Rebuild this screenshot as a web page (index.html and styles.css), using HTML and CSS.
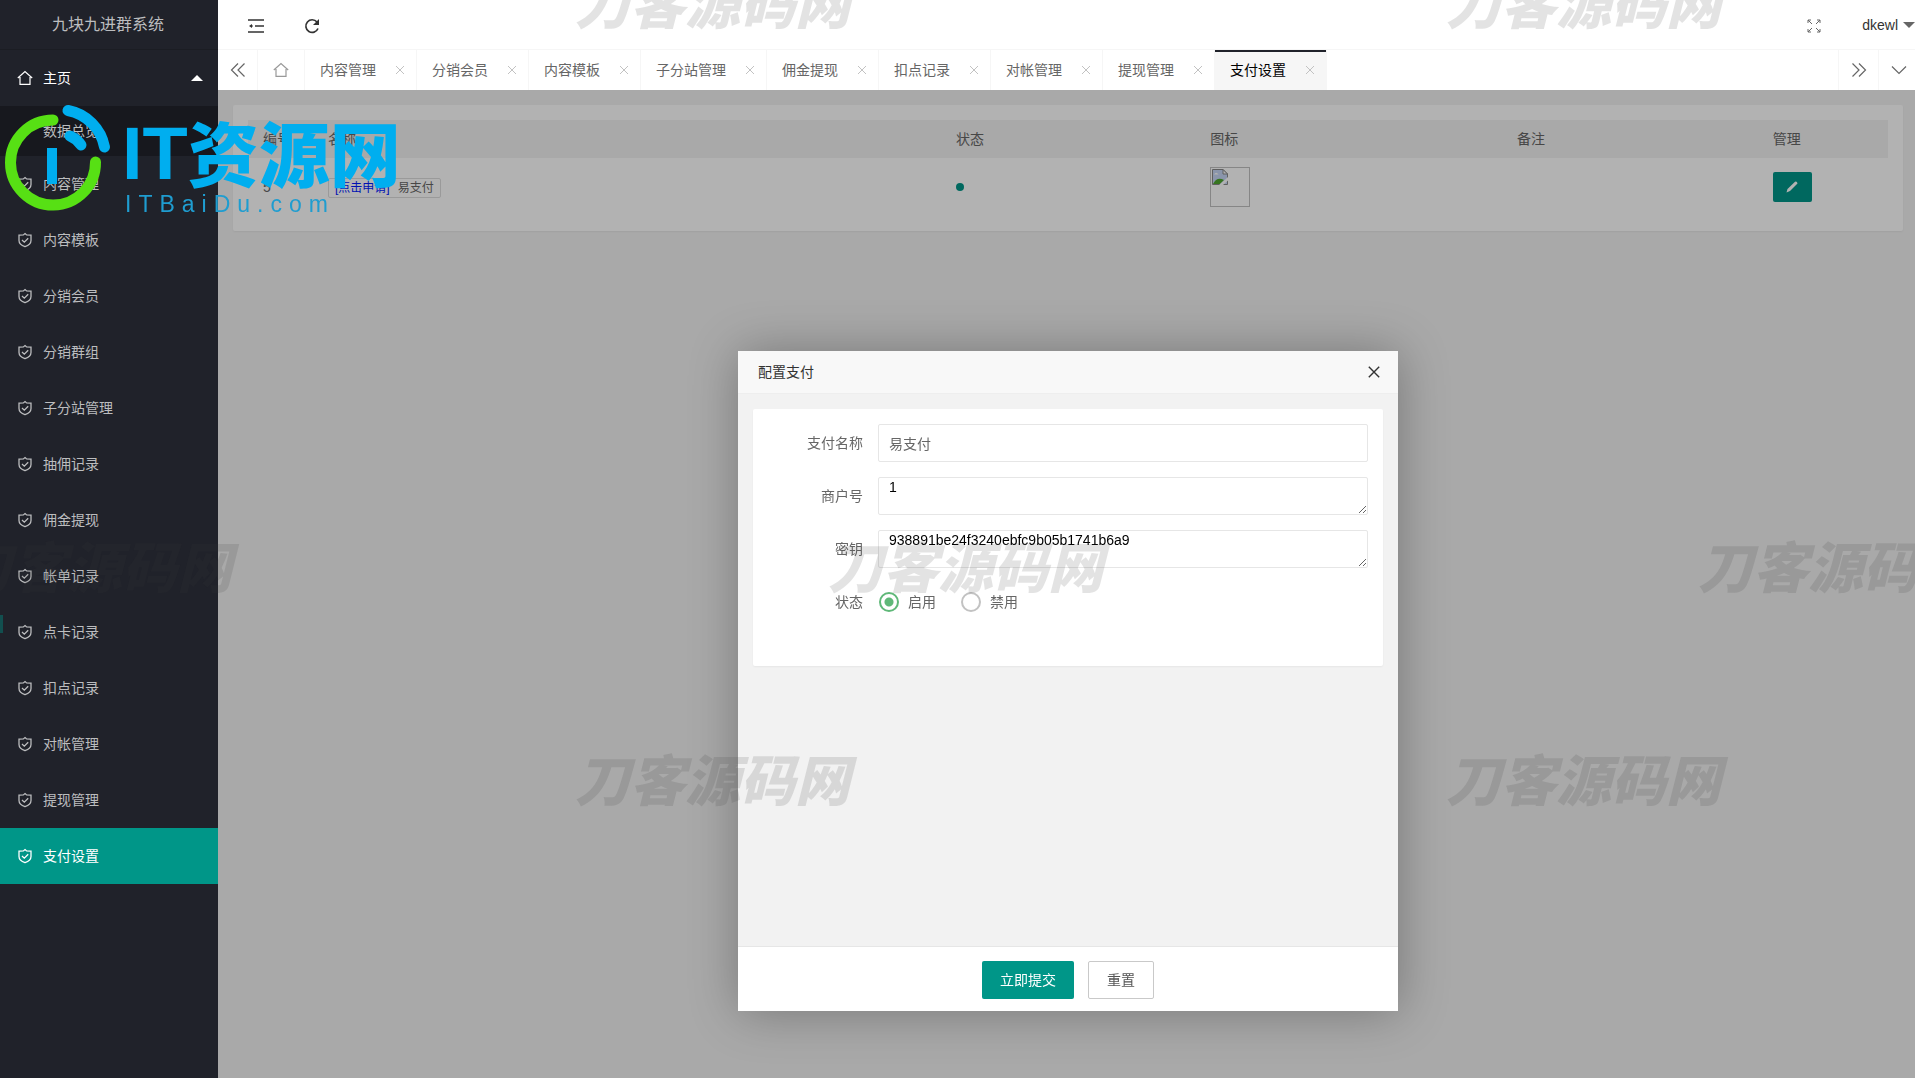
FILE: index.html
```html
<!DOCTYPE html>
<html lang="zh-CN">
<head>
<meta charset="utf-8">
<meta name="viewport" content="width=device-width, initial-scale=1">
<title>九块九进群系统</title>
<link rel="stylesheet" href="styles.css">
</head>
<body>
<svg class="sprite" aria-hidden="true">
  <symbol id="i-shield" viewBox="0 0 16 16"><path d="M8 1.6 9.6 2.9 14 3.2V8.600C14 11.500 11.400 13.600 8 14.700 4.600 13.600 2 11.500 2 8.600V3.200L6.400 2.900Z M5 8 7.300 10.200 11.200 6.200" fill="none" stroke="currentColor" stroke-width="1.300"/></symbol>
  <symbol id="i-home" viewBox="0 0 16 16"><path d="M.8 8 8 1.500 15.200 8M3 7V14.300H13V7" fill="none" stroke="currentColor" stroke-width="1.200"/></symbol>
  <symbol id="i-x" viewBox="0 0 10 10"><path d="M1 1 9 9M9 1 1 9" fill="none" stroke="currentColor"/></symbol>
</svg>
<div class="app">
  <aside class="side">
    <h1 class="brand">九块九进群系统</h1>
    <nav class="menu">
      <a class="item home" href="#"><svg class="ico"><use href="#i-home"/></svg>主页<span class="caret up"></span></a>
      <a class="item child" href="#">数据总览</a>
      <a class="item" href="#"><svg class="ico"><use href="#i-shield"/></svg>内容管理</a>
      <a class="item" href="#"><svg class="ico"><use href="#i-shield"/></svg>内容模板</a>
      <a class="item" href="#"><svg class="ico"><use href="#i-shield"/></svg>分销会员</a>
      <a class="item" href="#"><svg class="ico"><use href="#i-shield"/></svg>分销群组</a>
      <a class="item" href="#"><svg class="ico"><use href="#i-shield"/></svg>子分站管理</a>
      <a class="item" href="#"><svg class="ico"><use href="#i-shield"/></svg>抽佣记录</a>
      <a class="item" href="#"><svg class="ico"><use href="#i-shield"/></svg>佣金提现</a>
      <a class="item" href="#"><svg class="ico"><use href="#i-shield"/></svg>帐单记录</a>
      <a class="item trail" href="#"><svg class="ico"><use href="#i-shield"/></svg>点卡记录</a>
      <a class="item" href="#"><svg class="ico"><use href="#i-shield"/></svg>扣点记录</a>
      <a class="item" href="#"><svg class="ico"><use href="#i-shield"/></svg>对帐管理</a>
      <a class="item" href="#"><svg class="ico"><use href="#i-shield"/></svg>提现管理</a>
      <a class="item active" href="#" aria-current="page"><svg class="ico"><use href="#i-shield"/></svg>支付设置</a>
    </nav>
  </aside>
  <div class="main">
    <header class="top">
      <button class="tool" type="button" aria-label="收起菜单"><svg width="16" height="16" viewBox="0 0 16 16"><path d="M0 2H16M7 8H16M0 14H16" stroke="currentColor" stroke-width="1.500"/><path d="M1 8 4 6V10Z" fill="currentColor"/><path d="M3 8H5" stroke="currentColor"/></svg></button>
      <button class="tool" type="button" aria-label="刷新"><svg width="16" height="16" viewBox="0 0 16 16"><path d="M14 10.500A6.300 6.300 0 1 1 13 4" fill="none" stroke="currentColor" stroke-width="1.700"/><path d="M15 1V7H9Z" fill="currentColor"/></svg></button>
      <button class="tool full" type="button" aria-label="全屏"><svg width="14" height="14" viewBox="0 0 14 14"><path d="M1 4V1H4M1 1 5 5M10 1H13V4M13 1 9 5M1 10V13H4M1 13 5 9M13 10V13H10M13 13 9 9" fill="none" stroke="currentColor"/></svg></button>
      <button class="user" type="button">dkewl<span class="caret down"></span></button>
    </header>
    <nav class="tabs">
      <button class="nav-btn first" type="button" aria-label="向左"><svg width="16" height="16" viewBox="0 0 16 16"><path d="M8 1.500 1.500 8 8 14.500M14.500 1.500 8 8 14.500 14.500" fill="none" stroke="currentColor" stroke-width="1.200"/></svg></button>
      <a class="tab-home" href="#" aria-label="主页"><svg class="ico"><use href="#i-home"/></svg></a>
      <div class="tab"><a href="#">内容管理</a><button type="button" aria-label="关闭"><svg><use href="#i-x"/></svg></button></div>
      <div class="tab"><a href="#">分销会员</a><button type="button" aria-label="关闭"><svg><use href="#i-x"/></svg></button></div>
      <div class="tab"><a href="#">内容模板</a><button type="button" aria-label="关闭"><svg><use href="#i-x"/></svg></button></div>
      <div class="tab"><a href="#">子分站管理</a><button type="button" aria-label="关闭"><svg><use href="#i-x"/></svg></button></div>
      <div class="tab"><a href="#">佣金提现</a><button type="button" aria-label="关闭"><svg><use href="#i-x"/></svg></button></div>
      <div class="tab"><a href="#">扣点记录</a><button type="button" aria-label="关闭"><svg><use href="#i-x"/></svg></button></div>
      <div class="tab"><a href="#">对帐管理</a><button type="button" aria-label="关闭"><svg><use href="#i-x"/></svg></button></div>
      <div class="tab"><a href="#">提现管理</a><button type="button" aria-label="关闭"><svg><use href="#i-x"/></svg></button></div>
      <div class="tab on"><a href="#">支付设置</a><button type="button" aria-label="关闭"><svg><use href="#i-x"/></svg></button></div>
      <button class="nav-btn next" type="button" aria-label="向右"><svg width="16" height="16" viewBox="0 0 16 16"><path d="M1.500 1.500 8 8 1.500 14.500M8 1.500 14.500 8 8 14.500" fill="none" stroke="currentColor" stroke-width="1.200"/></svg></button>
      <button class="nav-btn more" type="button" aria-label="更多"><svg width="16" height="16" viewBox="0 0 16 16"><path d="M1 4.500 8 11.500 15 4.500" fill="none" stroke="currentColor" stroke-width="1.200"/></svg></button>
    </nav>
    <main class="page">
      <section class="card">
        <table class="list">
          <colgroup><col class="c-id"><col class="c-name"><col class="c-state"><col class="c-icon"><col class="c-note"><col class="c-act"></colgroup>
          <thead><tr><th>编号</th><th>名称</th><th>状态</th><th>图标</th><th>备注</th><th>管理</th></tr></thead>
          <tbody><tr>
            <td>5</td>
            <td><span class="badge"><a href="#">[点击申请]</a>易支付</span></td>
            <td><span class="dot"></span></td>
            <td><span class="thumb"><svg width="16" height="16" viewBox="0 0 16 16"><path d="M.5.500H11L15.500 5V15.500H.5Z" fill="#c6d6f5" stroke="#888"/><path d="M2 5.500Q4 2 6.500 5.500Z" fill="#fff"/><path d="M1 15Q5 7 12 11L8 15Z" fill="#4fa82e"/><path d="M16 8 7 16H11L16 11.500Z" fill="#fff"/><path d="M11 .5V5H15.500Z" fill="#fff" stroke="#888"/></svg></span></td>
            <td></td>
            <td><button class="edit" type="button" aria-label="编辑"><svg width="14" height="14" viewBox="0 0 14 14"><path d="M1.500 12.500 2.500 9 10 1.800Q12 1 12.500 3.500L5 11Z" fill="currentColor"/></svg></button></td>
          </tr></tbody>
        </table>
      </section>
      <div class="shade"></div>
    </main>
  </div>
</div>

<div class="layer">
  <form class="dialog" role="dialog" aria-labelledby="dlg-title">
    <header class="dlg-head"><h2 id="dlg-title">配置支付</h2><button type="button" aria-label="关闭"><svg width="12" height="12" viewBox="0 0 12 12"><path d="M.8.800 11.200 11.200M11.200.800.8 11.200" stroke="currentColor" stroke-width="1.400"/></svg></button></header>
    <div class="dlg-body">
      <div class="fields">
        <div class="field"><label for="f-name">支付名称</label><input id="f-name" type="text" value="易支付"></div>
        <div class="field"><label for="f-mch">商户号</label><textarea id="f-mch">1</textarea></div>
        <div class="field"><label for="f-key">密钥</label><textarea id="f-key">938891be24f3240ebfc9b05b1741b6a9</textarea></div>
        <div class="field" role="radiogroup" aria-labelledby="l-state"><span class="label" id="l-state">状态</span>
          <div class="radios"><label><input type="radio" name="state" checked>启用</label><label><input type="radio" name="state">禁用</label></div>
        </div>
      </div>
    </div>
    <footer class="dlg-foot"><button class="btn primary" type="submit">立即提交</button><button class="btn" type="reset">重置</button></footer>
  </form>
</div>

<div class="marks" aria-hidden="true">
  <span class="mark m1">刀客源码网</span>
  <span class="mark m2">刀客源码网</span>
  <span class="mark m3">刀客源码网</span>
  <span class="mark m4">刀客源码网</span>
  <span class="mark m5">刀客源码网</span>
  <span class="mark m6">刀客源码网</span>
  <span class="mark m7">刀客源码网</span>
  <div class="logo">
    <svg width="112" height="112" viewBox="0 0 112 112"><g fill="none" stroke-linecap="round"><path d="M53 16A42.500 42.500 0 1 0 95.500 58" stroke="#57e014" stroke-width="11"/><path d="M68 6.500A46 46 0 0 1 104.500 43" stroke="#00aeef" stroke-width="11"/><path d="M70 32Q77 35 81 41" stroke="#00aeef" stroke-width="11"/></g><path d="M47 44H57V80H47Z" fill="#00aeef"/></svg>
    <div class="words"><div class="big"><b>IT</b><span>资源网</span></div><div class="small">ITBaiDu.com</div></div>
  </div>
</div>
</body>
</html>
```
FILE: styles.css
```css
* { box-sizing: border-box; }
body { margin: 0; overflow: hidden; font: 14px/24px "Liberation Sans", "Noto Sans CJK SC", sans-serif; color: #666; background: #f2f2f2; }
a { color: inherit; text-decoration: none; }
button { font: inherit; color: inherit; border: 0; padding: 0; background: none; display: inline-flex; align-items: center; justify-content: center; }
.sprite { position: absolute; width: 0; height: 0; }
.ico { width: 16px; height: 16px; flex: none; }

.app { display: flex; min-height: 100vh; }
.side { flex: 0 0 218px; background: #20222a; color: #bcbdbf; }
.brand { margin: 0; height: 50px; font-size: 16px; font-weight: 400; line-height: 50px; text-align: center; border-bottom: 1px solid #1b1d23; padding-right: 2px; }
.item { display: flex; align-items: center; gap: 10px; height: 56px; padding: 0 15px 0 17px; }
.home { color: #fff; }
.child { height: 50px; padding-left: 43px; background: #17181e; }
.active { background: #009688; color: #fff; }
.trail { background: linear-gradient(#124f4f, #124f4f) no-repeat 0 11px / 3px 18px; }
.caret { border: 6px solid transparent; }
.up { margin-left: auto; border-top: 0; border-bottom-color: #fff; }
.down { border-bottom: 0; border-top-color: #666; }

.main { flex: 1; min-width: 0; display: flex; flex-direction: column; }
.top { display: flex; align-items: center; height: 50px; background: #fff; border-bottom: 1px solid #f6f6f6; color: #333; padding-left: 10px; }
.tool { width: 56px; height: 49px; padding-top: 2px; }
.full { margin-left: auto; color: #666; }
.user { gap: 5px; padding-left: 20px; }
.tabs { display: flex; height: 40px; background: #fff; }
.nav-btn { width: 40px; border-left: 1px solid #f6f6f6; }
.first { border-left: 0; border-right: 1px solid #f6f6f6; }
.next { margin-left: auto; }
.more { width: 37px; padding-left: 3px; }
.tab-home { display: flex; align-items: center; width: 47px; padding-left: 15px; color: #999; border-right: 1px solid #f6f6f6; }
.tab { display: flex; align-items: center; gap: 18px; padding: 0 10px 0 15px; border-right: 1px solid #f6f6f6; }
.tab button { color: #c2c2c2; width: 12px; height: 12px; }
.tab svg { width: 10px; height: 10px; }
.on { background: #f6f6f6; color: #000; box-shadow: inset 0 2px #20222a; }

.page { position: relative; flex: 1; padding: 15px 12px 15px 15px; }
.shade { position: absolute; inset: 0; background: rgba(0, 0, 0, .3); }
.card { background: #fff; border-radius: 2px; padding: 15px; box-shadow: 0 1px 2px rgba(0, 0, 0, .05); }
.list { width: 100%; border-collapse: collapse; table-layout: fixed; }
.list th { height: 38px; padding: 0 15px; background: #f2f2f2; font-weight: 400; text-align: left; }
.list td { height: 58px; padding: 0 15px; }
.c-id { width: 65px; } .c-name { width: 38.3%; } .c-state { width: 15.5%; } .c-icon { width: 18.7%; } .c-note { width: 15.6%; }
.badge { display: inline-flex; gap: 8px; padding: 0 6px; font-size: 12px; line-height: 18px; border: 1px solid #ddd; border-radius: 2px; }
.badge a { color: #0019ff; }
.dot { display: block; width: 8px; height: 8px; border-radius: 50%; background: #009688; }
.thumb { display: flex; width: 40px; height: 40px; padding: 1px; border: 1px solid #c0c0c0; }
.edit { width: 39px; height: 30px; background: #009688; color: #fff; border-radius: 2px; vertical-align: middle; }

.layer { position: fixed; inset: 0; display: flex; align-items: flex-start; justify-content: center; padding: 351px 0 0 221px; }
.dialog { display: flex; flex-direction: column; width: 660px; height: 660px; background: #f2f2f2; border-radius: 2px; box-shadow: 1px 1px 50px rgba(0, 0, 0, .3); }
.dlg-head { display: flex; align-items: center; justify-content: space-between; height: 43px; padding: 0 18px 0 20px; background: #f8f8f8; border-bottom: 1px solid #eee; color: #333; }
.dlg-head h2 { margin: 0; font-size: 14px; font-weight: 400; }
.dlg-body { flex: 1; padding: 15px; }
.fields { display: flex; flex-direction: column; gap: 15px; padding: 15px 15px 45px 0; background: #fff; border-radius: 2px; box-shadow: 0 1px 2px rgba(0, 0, 0, .05); }
.field { display: flex; align-items: center; height: 38px; }
.field > label, .label { flex: 0 0 125px; padding-right: 15px; text-align: right; }
.field > input, .field textarea { flex: 1; height: 38px; border: 1px solid #e6e6e6; border-radius: 2px; padding: 0 10px; font: inherit; color: inherit; background: #fff; }
.field textarea { color: #000; line-height: 18px; resize: vertical; overflow: hidden; }
.radios { display: flex; gap: 24px; }
.radios label { display: flex; align-items: center; gap: 9px; }
.radios input { appearance: none; width: 20px; height: 20px; margin: 0 0 0 1px; border: 2px solid #c2c2c2; border-radius: 50%; }
.radios input:checked { border-color: #5fb878; background: radial-gradient(circle, #5fb878 4px, transparent 5px); }
.dlg-foot { display: flex; justify-content: center; gap: 14px; height: 65px; padding-top: 14px; background: #fff; border-top: 1px solid #e6e6e6; }
.btn { height: 38px; padding: 0 18px; border: 1px solid #c9c9c9; border-radius: 2px; color: #555; }
.primary { border: 0; background: #009688; color: #fff; }

.marks { position: fixed; inset: 0; overflow: hidden; pointer-events: none; }
.mark { position: absolute; font: italic 900 55px/60px "Noto Sans CJK SC", sans-serif; color: rgba(60, 60, 60, .14); white-space: nowrap; }
.m1 { left: 575px; top: -30px; } .m2 { left: 1446px; top: -30px; }
.m3 { left: -43px; top: 534px; } .m4 { left: 828px; top: 534px; } .m5 { left: 1698px; top: 534px; }
.m6 { left: 575px; top: 747px; } .m7 { left: 1446px; top: 747px; }
.logo { position: absolute; left: 0; top: 104px; display: flex; gap: 10px; color: #00aeef; }
.words { padding-top: 10px; }
.big { display: flex; height: 78px; font: 900 71px/72px "Noto Sans CJK SC", sans-serif; }
.big b { font: 700 74px/80px "Liberation Sans", sans-serif; }
.small { font-size: 23px; line-height: 24px; letter-spacing: 7px; padding-left: 3px; color: #1f9dd0; }
```
